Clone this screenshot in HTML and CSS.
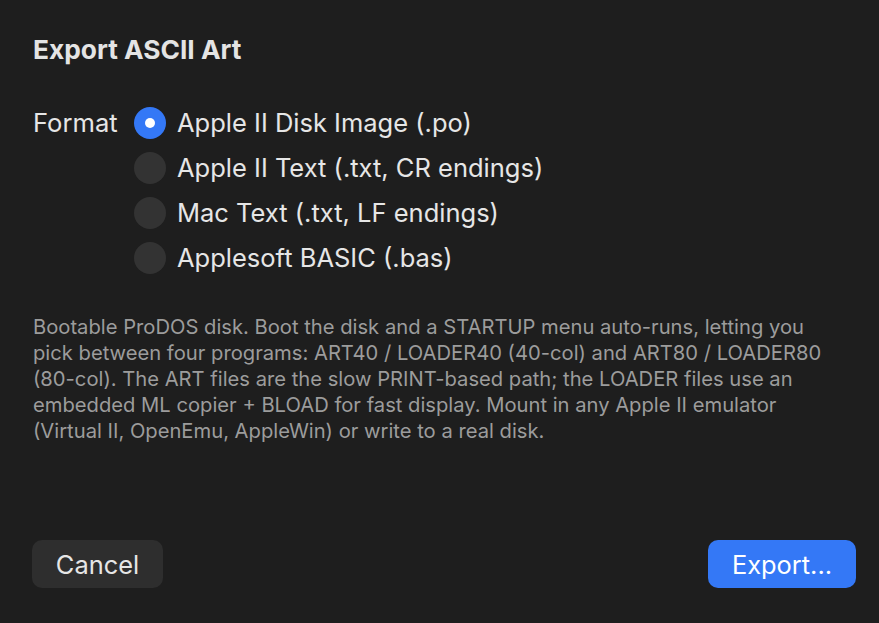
FILE: index.html
```html
<!DOCTYPE html>
<html lang="en">
<head>
<meta charset="utf-8">
<title>Export ASCII Art</title>
<link rel="stylesheet" href="styles.css">
</head>
<body>
<div class="dialog">
  <h1 class="title">Export ASCII Art</h1>
  <div class="format">
    <div class="format-label">Format</div>
    <div class="options">
      <div class="option"><span class="radio selected"></span><span class="option-text">Apple II Disk Image (.po)</span></div>
      <div class="option"><span class="radio"></span><span class="option-text">Apple II Text (.txt, CR endings)</span></div>
      <div class="option"><span class="radio"></span><span class="option-text">Mac Text (.txt, LF endings)</span></div>
      <div class="option"><span class="radio"></span><span class="option-text">Applesoft BASIC (.bas)</span></div>
    </div>
  </div>
  <p class="desc">Bootable ProDOS disk. Boot the disk and a STARTUP menu auto-runs, letting you<br>pick between four programs: ART40 / LOADER40 (40-col) and ART80 / LOADER80<br>(80-col). The ART files are the slow PRINT-based path; the LOADER files use an<br>embedded ML copier + BLOAD for fast display. Mount in any Apple II emulator<br>(Virtual II, OpenEmu, AppleWin) or write to a real disk.</p>
  <div class="buttons">
    <button class="btn cancel">Cancel</button>
    <button class="btn primary">Export...</button>
  </div>
</div>
</body>
</html>
```
FILE: styles.css
```css
html, body {
  margin: 0;
  padding: 0;
  background: #1e1e1e;
}
body {
  font-family: Inter, "Noto Sans", sans-serif;
  color: #e6e6e6;
}
.dialog {
  height: 623px;
  box-sizing: border-box;
  padding: 36px 23px 35px 33px;
  display: flex;
  flex-direction: column;
}
.title {
  margin: 0;
  font-size: 26.3px;
  line-height: 28px;
  font-weight: 700;
  color: #e4e4e4;
}
.format {
  margin-top: 36px;
  display: flex;
  align-items: flex-start;
}
.format-label {
  font-size: 25.6px;
  line-height: 45px;
  width: 101px;
  flex: none;
  color: #e6e6e6;
}
.options {
  display: flex;
  flex-direction: column;
}
.option {
  height: 45px;
  display: flex;
  align-items: center;
  gap: 11px;
}
.radio {
  width: 32px;
  height: 32px;
  border-radius: 50%;
  background: #333333;
  flex: none;
  position: relative;
}
.radio.selected {
  background: #3478f6;
}
.radio.selected::after {
  content: "";
  position: absolute;
  left: 11px;
  top: 11px;
  width: 10px;
  height: 10px;
  border-radius: 50%;
  background: #ffffff;
}
.option-text {
  font-size: 25.5px;
  color: #e6e6e6;
}
.desc {
  margin: 33.5px 0 0 0;
  font-size: 20.2px;
  line-height: 26px;
  color: #9c9c9c;
  white-space: nowrap;
}
.buttons {
  margin-top: auto;
  display: flex;
  justify-content: space-between;
}
.btn {
  height: 48px;
  border: none;
  border-radius: 10px;
  font-family: inherit;
  font-size: 25.4px;
  padding: 0;
}
.cancel {
  width: 131px;
  background: #2e2e2e;
  color: #e6e6e6;
  margin-left: -1px;
}
.primary {
  width: 148px;
  background: #3478f6;
  color: #ffffff;
}
```
